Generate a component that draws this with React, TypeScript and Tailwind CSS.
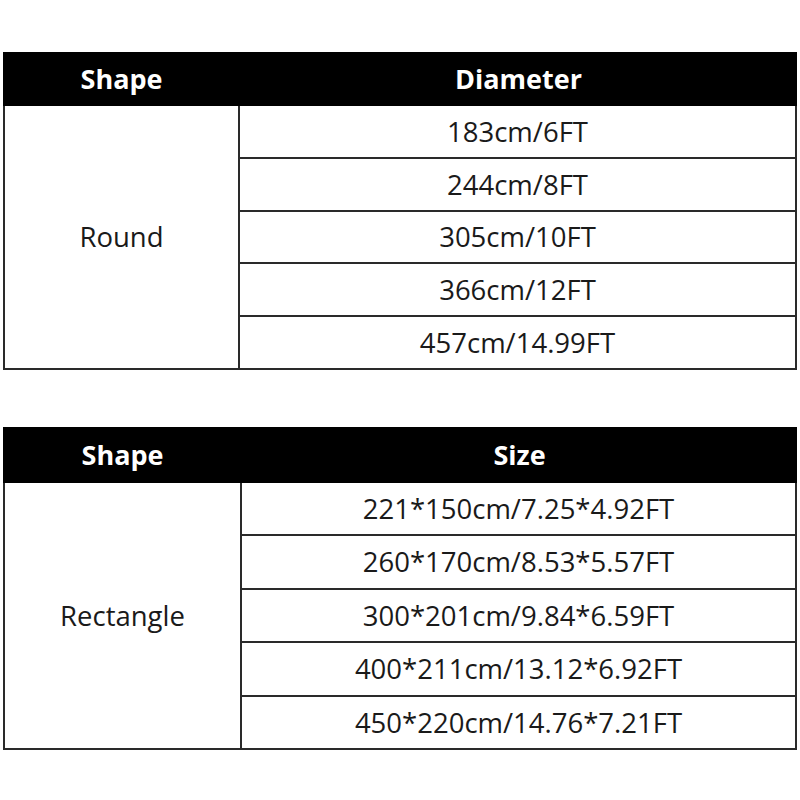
import React from "react";

type T = { head: string; label: string; rows: string[]; left: number; headH: number; bodyH: number };

function Table({ head, label, rows, left, headH, bodyH }: T) {
  return (
    <div className="w-[794px] ml-[3px]">
      <div className="flex bg-black text-white font-bold text-[27px]" style={{ height: headH }}>
        <div className="flex items-center justify-center" style={{ width: left + 2 }}>Shape</div>
        <div className="flex-1 flex items-center justify-center">{head}</div>
      </div>
      <div className="flex border-x-2 border-b-2 border-[#2a2a2a]" style={{ height: bodyH }}>
        <div className="flex items-center justify-center border-r-2 border-[#2a2a2a] text-[27.5px] text-[#1a1a1a]" style={{ width: left }}>
          {label}
        </div>
        <div className="flex-1 flex flex-col">
          {rows.map((r, i) => (
            <div
              key={r}
              className={
                "flex-1 flex items-center justify-center text-[27.5px] text-[#1a1a1a] " +
                (i < rows.length - 1 ? "border-b-2 border-[#2a2a2a]" : "")
              }
            >
              {r}
            </div>
          ))}
        </div>
      </div>
    </div>
  );
}

export default function App() {
  return (
    <div className="w-[800px] h-[800px] bg-white pt-[52px]" style={{ fontFamily: "'Open Sans', 'Noto Sans', sans-serif" }}>
      <Table
        head="Diameter"
        label="Round"
        left={235}
        headH={54}
        bodyH={264}
        rows={["183cm/6FT", "244cm/8FT", "305cm/10FT", "366cm/12FT", "457cm/14.99FT"]}
      />
      <div className="h-[57px]" />
      <Table
        head="Size"
        label="Rectangle"
        left={237}
        headH={56}
        bodyH={267}
        rows={[
          "221*150cm/7.25*4.92FT",
          "260*170cm/8.53*5.57FT",
          "300*201cm/9.84*6.59FT",
          "400*211cm/13.12*6.92FT",
          "450*220cm/14.76*7.21FT",
        ]}
      />
    </div>
  );
}
